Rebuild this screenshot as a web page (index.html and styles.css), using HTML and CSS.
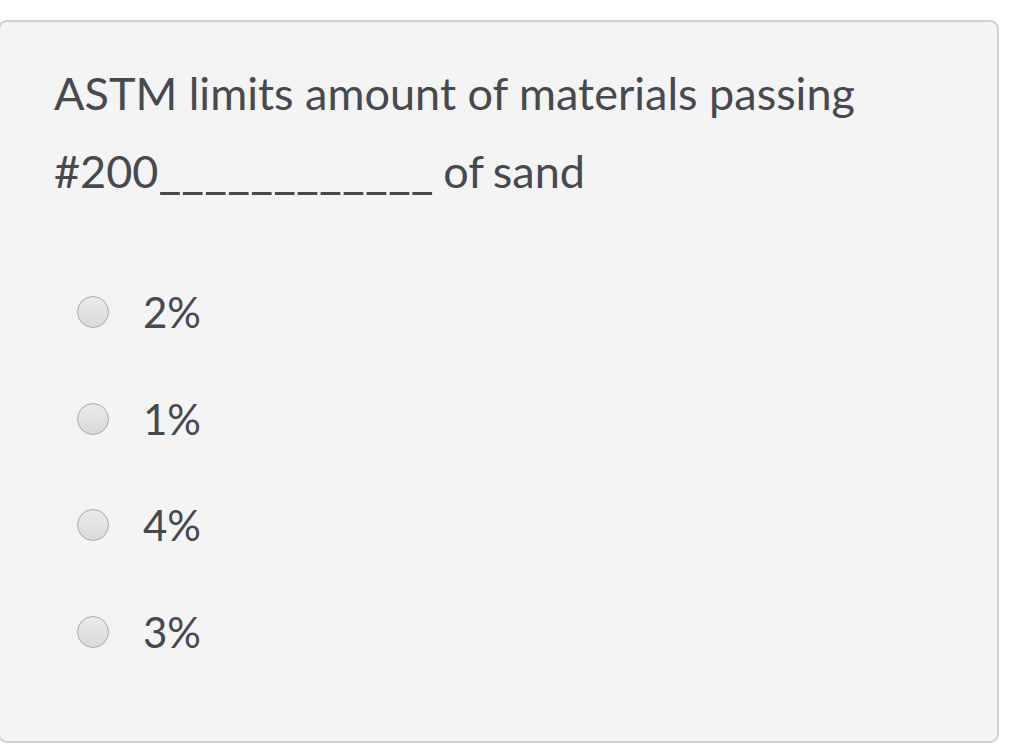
FILE: index.html
```html
<!DOCTYPE html>
<html>
<head>
<meta charset="utf-8">
<link rel="stylesheet" href="styles.css">
</head>
<body>
<div class="card">
  <p class="question"><span class="line">ASTM limits amount of materials passing</span> <span class="line">#200<span class="blank">____________</span><span class="tail"> of sand</span></span></p>
  <div class="options">
    <label class="option"><span class="radio"></span><span class="label">2%</span></label>
    <label class="option"><span class="radio"></span><span class="label">1%</span></label>
    <label class="option"><span class="radio"></span><span class="label">4%</span></label>
    <label class="option"><span class="radio"></span><span class="label">3%</span></label>
  </div>
</div>
</body>
</html>
```
FILE: styles.css
```css
html, body {
  margin: 0;
  padding: 0;
  background: #ffffff;
}
body {
  font-family: Lato, "Liberation Sans", sans-serif;
  color: #46494e;
  overflow: hidden;
}
.card {
  box-sizing: border-box;
  margin: 20px 0 0 -2px;
  width: 1001px;
  height: 723px;
  background: #f4f4f4;
  border: 2px solid #d0d0d0;
  border-radius: 9px;
  padding: 32px 40px 0 54px;
}
.question {
  margin: 0;
  font-size: 45px;
  line-height: 78px;
  width: 880px;
}
.line {
  white-space: nowrap;
}
.blank {
  font-size: 50px;
  line-height: 1;
}
.tail {
  word-spacing: -2px;
}
.options {
  display: flex;
  flex-direction: column;
  margin-top: 49px;
  padding-left: 23px;
}
.option {
  display: flex;
  align-items: center;
  height: 106.5px;
}
.radio {
  box-sizing: border-box;
  width: 32px;
  height: 32px;
  border-radius: 50%;
  border: 1px solid #a9a9a9;
  background: linear-gradient(#eaeaea, #dadada);
  flex: none;
}
.label {
  margin-left: 34px;
  font-size: 42px;
}
```
